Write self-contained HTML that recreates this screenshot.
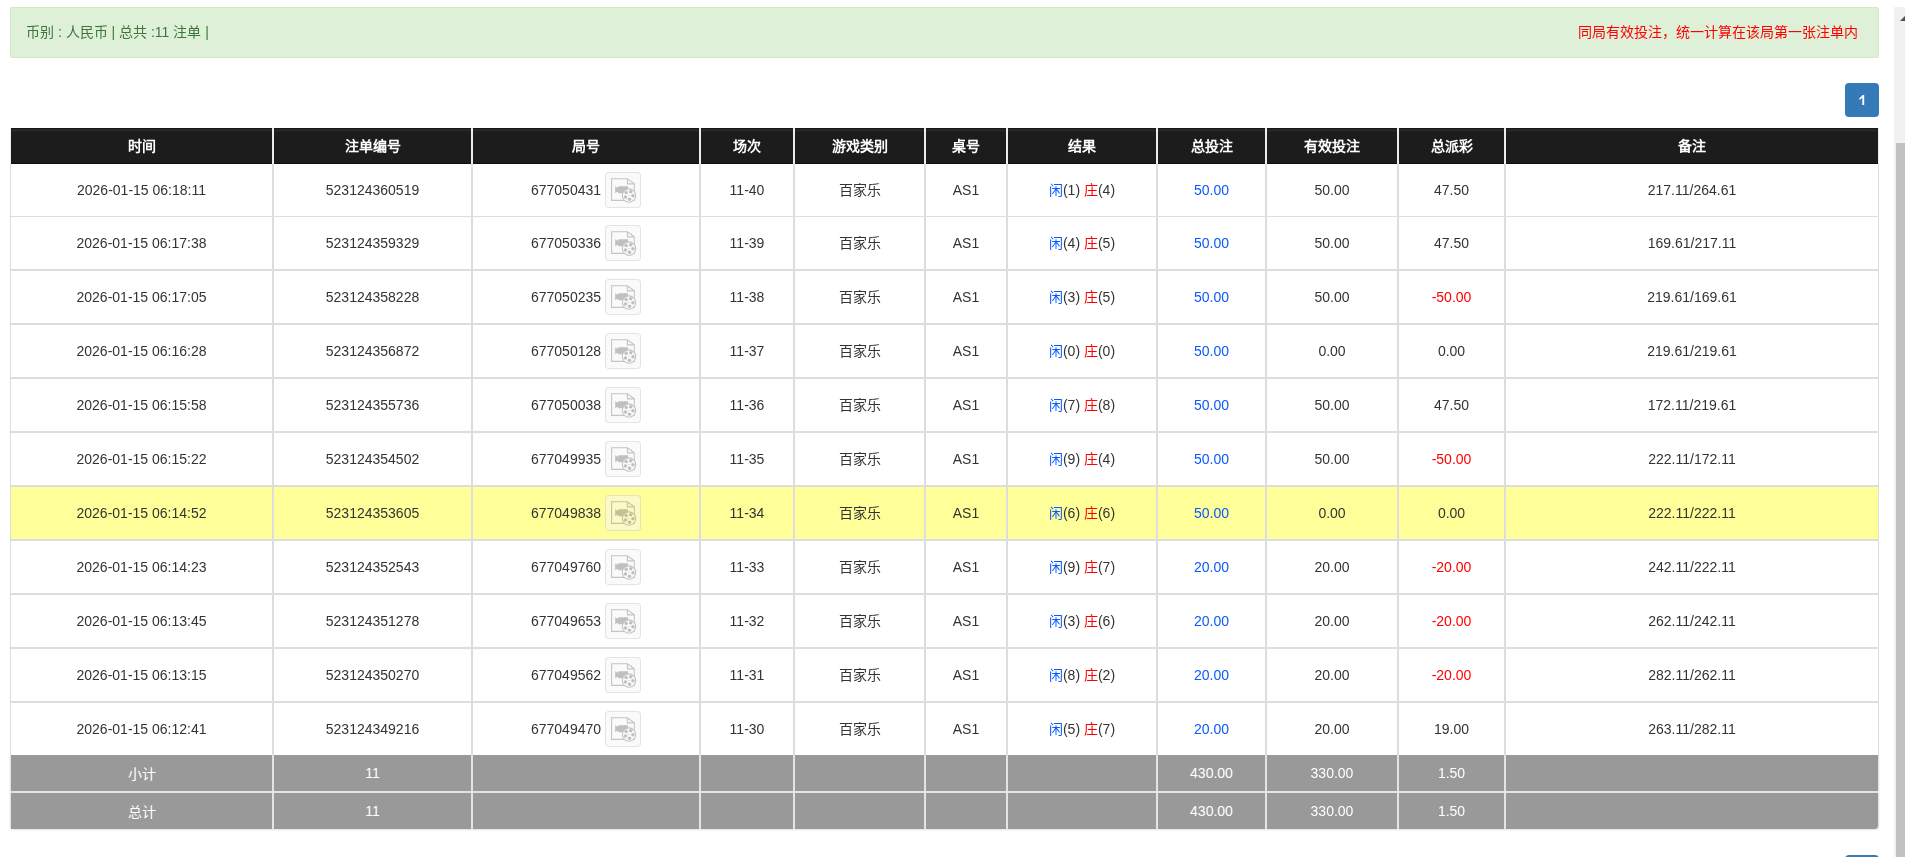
<!DOCTYPE html>
<html lang="zh-CN"><head><meta charset="utf-8"><title>注单</title>
<style>
html,body{margin:0;padding:0;background:#fff;overflow:hidden;}
body{width:1905px;height:857px;position:relative;font-family:"Liberation Sans",sans-serif;font-size:14px;color:#333;}
.a{position:absolute;}
.alert{left:10px;top:7px;width:1867px;height:49px;background:#dff0d8;border:1px solid #d6e9c6;border-radius:2px;}
.alert .l{position:absolute;left:15px;top:14px;line-height:20px;color:#3c763d;white-space:nowrap;}
.alert .r{position:absolute;right:20px;top:14px;line-height:20px;color:#ff0000;white-space:nowrap;}
.pg{left:1845px;top:83px;width:34px;height:34px;background:#337ab7;border-radius:4px;color:#fff;text-align:center;line-height:34px;}
.pg2{left:1845px;top:855px;width:34px;height:34px;background:#337ab7;border-radius:4px;}
.hd{top:128px;height:36px;background:linear-gradient(#171717 0,#171717 1px,#272727 1px,#262626 3px,#1c1c1c 4px,#1c1c1c 35px,#0d0d0d 35px);color:#fff;font-weight:bold;text-align:center;line-height:36px;}
.hsep{top:128px;height:36px;width:2px;background:#ececec;}
.c{display:flex;align-items:center;justify-content:center;white-space:nowrap;}
.vl{width:2px;background:#dddddd;}
.hl{background:#dddddd;}
.ft{background:#999999;color:#fff;}
.k{font-style:normal;position:relative;top:-1px;}
.blue{color:#0a58ff;}
.red{color:#ff0000;}
.ib{display:block;box-sizing:border-box;width:36px;height:36px;margin-left:4px;border:1px solid rgba(0,0,0,0.085);border-radius:4px;background:rgba(245,245,245,0.5);}
.ic{display:block;mix-blend-mode:multiply;}
.sb{left:1894px;top:7px;width:11px;height:850px;background:#f1f1f1;}
.th{left:1896px;top:143px;width:9px;height:714px;background:#c1c1c1;}
</style></head><body>

<div class="a alert"><span class="l">币别 : 人民币 | 总共 :11 注单 |</span><span class="r">同局有效投注，统一计算在该局第一张注单内</span></div>
<div class="a pg"><svg width="34" height="34" style="display:block"><path d="M17.3 12 H19.2 V22 H17.3 Z" fill="#fff"/><path d="M14 15.6 L17.6 12.2 L18.8 13.4 L14.9 16.8 Z" fill="#fff"/></svg></div><div class="a pg2"></div>
<div class="a hl" style="left:10px;top:164px;width:1px;height:591px"></div>
<div class="a hl" style="left:1878px;top:164px;width:1px;height:591px"></div>
<div class="a hd" style="left:11px;width:261px">时间</div>
<div class="a hd" style="left:274px;width:197px">注单编号</div>
<div class="a hd" style="left:473px;width:226px">局号</div>
<div class="a hd" style="left:701px;width:92px">场次</div>
<div class="a hd" style="left:795px;width:129px">游戏类别</div>
<div class="a hd" style="left:926px;width:80px">桌号</div>
<div class="a hd" style="left:1008px;width:148px">结果</div>
<div class="a hd" style="left:1158px;width:107px">总投注</div>
<div class="a hd" style="left:1267px;width:130px">有效投注</div>
<div class="a hd" style="left:1399px;width:105px">总派彩</div>
<div class="a hd" style="left:1506px;width:372px">备注</div>
<div class="a hsep" style="left:272px;width:2px"></div>
<div class="a hsep" style="left:471px;width:2px"></div>
<div class="a hsep" style="left:699px;width:2px"></div>
<div class="a hsep" style="left:793px;width:2px"></div>
<div class="a hsep" style="left:924px;width:2px"></div>
<div class="a hsep" style="left:1006px;width:2px"></div>
<div class="a hsep" style="left:1156px;width:2px"></div>
<div class="a hsep" style="left:1265px;width:2px"></div>
<div class="a hsep" style="left:1397px;width:2px"></div>
<div class="a hsep" style="left:1504px;width:2px"></div>
<div class="a hsep" style="left:10px;width:1px"></div>
<div class="a hsep" style="left:1878px;width:1px"></div>
<div class="a" style="left:11px;top:164px;width:1867px;height:52px;background:#ffffff"></div>
<div class="a c" style="left:11px;top:164px;width:261px;height:52px">2026-01-15 06:18:11</div>
<div class="a c" style="left:274px;top:164px;width:197px;height:52px">523124360519</div>
<div class="a c" style="left:473px;top:164px;width:226px;height:52px">677050431<span class="ib"><svg width="34" height="34" viewBox="0 0 34 34" class="ic"><g transform="translate(2,2)"><path d="M3.6 3.8 H19.4 L26.3 8.9 V25.4 H3.6 Z" fill="#fff" stroke="#c9c9c9" stroke-width="1.1"/><path d="M19.4 3.8 V8.9 H26.3" fill="none" stroke="#c9c9c9" stroke-width="1.1"/><path d="M7.2 11.3 L9.2 12.6 H10.2 V11.3 H20 V18.2 H10.2 V17 H9.2 L7.2 18.2 Z" fill="#c4c4c4"/><circle cx="21" cy="20.6" r="6.7" fill="#fff" stroke="#c9c9c9" stroke-width="1.1"/><circle cx="18.2" cy="17.5" r="1.75" fill="#c4c4c4"/><circle cx="22.75" cy="16.8" r="1.75" fill="#c4c4c4"/><circle cx="25" cy="20.65" r="1.75" fill="#c4c4c4"/><circle cx="21.5" cy="24.2" r="1.75" fill="#c4c4c4"/><circle cx="17.5" cy="22" r="1.75" fill="#c4c4c4"/><circle cx="21" cy="20.5" r="0.6" fill="#c4c4c4"/></g></svg></span></div>
<div class="a c" style="left:701px;top:164px;width:92px;height:52px">11-40</div>
<div class="a c" style="left:795px;top:164px;width:129px;height:52px"><i class="k">百家乐</i></div>
<div class="a c" style="left:926px;top:164px;width:80px;height:52px">AS1</div>
<div class="a c" style="left:1008px;top:164px;width:148px;height:52px"><i class="k blue">闲</i>(1)&nbsp;<i class="k red">庄</i>(4)</div>
<div class="a c" style="left:1158px;top:164px;width:107px;height:52px"><span class="blue">50.00</span></div>
<div class="a c" style="left:1267px;top:164px;width:130px;height:52px">50.00</div>
<div class="a c" style="left:1399px;top:164px;width:105px;height:52px">47.50</div>
<div class="a c" style="left:1506px;top:164px;width:372px;height:52px">217.11/264.61</div>
<div class="a" style="left:11px;top:217px;width:1867px;height:52px;background:#ffffff"></div>
<div class="a c" style="left:11px;top:217px;width:261px;height:52px">2026-01-15 06:17:38</div>
<div class="a c" style="left:274px;top:217px;width:197px;height:52px">523124359329</div>
<div class="a c" style="left:473px;top:217px;width:226px;height:52px">677050336<span class="ib"><svg width="34" height="34" viewBox="0 0 34 34" class="ic"><g transform="translate(2,2)"><path d="M3.6 3.8 H19.4 L26.3 8.9 V25.4 H3.6 Z" fill="#fff" stroke="#c9c9c9" stroke-width="1.1"/><path d="M19.4 3.8 V8.9 H26.3" fill="none" stroke="#c9c9c9" stroke-width="1.1"/><path d="M7.2 11.3 L9.2 12.6 H10.2 V11.3 H20 V18.2 H10.2 V17 H9.2 L7.2 18.2 Z" fill="#c4c4c4"/><circle cx="21" cy="20.6" r="6.7" fill="#fff" stroke="#c9c9c9" stroke-width="1.1"/><circle cx="18.2" cy="17.5" r="1.75" fill="#c4c4c4"/><circle cx="22.75" cy="16.8" r="1.75" fill="#c4c4c4"/><circle cx="25" cy="20.65" r="1.75" fill="#c4c4c4"/><circle cx="21.5" cy="24.2" r="1.75" fill="#c4c4c4"/><circle cx="17.5" cy="22" r="1.75" fill="#c4c4c4"/><circle cx="21" cy="20.5" r="0.6" fill="#c4c4c4"/></g></svg></span></div>
<div class="a c" style="left:701px;top:217px;width:92px;height:52px">11-39</div>
<div class="a c" style="left:795px;top:217px;width:129px;height:52px"><i class="k">百家乐</i></div>
<div class="a c" style="left:926px;top:217px;width:80px;height:52px">AS1</div>
<div class="a c" style="left:1008px;top:217px;width:148px;height:52px"><i class="k blue">闲</i>(4)&nbsp;<i class="k red">庄</i>(5)</div>
<div class="a c" style="left:1158px;top:217px;width:107px;height:52px"><span class="blue">50.00</span></div>
<div class="a c" style="left:1267px;top:217px;width:130px;height:52px">50.00</div>
<div class="a c" style="left:1399px;top:217px;width:105px;height:52px">47.50</div>
<div class="a c" style="left:1506px;top:217px;width:372px;height:52px">169.61/217.11</div>
<div class="a" style="left:11px;top:271px;width:1867px;height:52px;background:#ffffff"></div>
<div class="a c" style="left:11px;top:271px;width:261px;height:52px">2026-01-15 06:17:05</div>
<div class="a c" style="left:274px;top:271px;width:197px;height:52px">523124358228</div>
<div class="a c" style="left:473px;top:271px;width:226px;height:52px">677050235<span class="ib"><svg width="34" height="34" viewBox="0 0 34 34" class="ic"><g transform="translate(2,2)"><path d="M3.6 3.8 H19.4 L26.3 8.9 V25.4 H3.6 Z" fill="#fff" stroke="#c9c9c9" stroke-width="1.1"/><path d="M19.4 3.8 V8.9 H26.3" fill="none" stroke="#c9c9c9" stroke-width="1.1"/><path d="M7.2 11.3 L9.2 12.6 H10.2 V11.3 H20 V18.2 H10.2 V17 H9.2 L7.2 18.2 Z" fill="#c4c4c4"/><circle cx="21" cy="20.6" r="6.7" fill="#fff" stroke="#c9c9c9" stroke-width="1.1"/><circle cx="18.2" cy="17.5" r="1.75" fill="#c4c4c4"/><circle cx="22.75" cy="16.8" r="1.75" fill="#c4c4c4"/><circle cx="25" cy="20.65" r="1.75" fill="#c4c4c4"/><circle cx="21.5" cy="24.2" r="1.75" fill="#c4c4c4"/><circle cx="17.5" cy="22" r="1.75" fill="#c4c4c4"/><circle cx="21" cy="20.5" r="0.6" fill="#c4c4c4"/></g></svg></span></div>
<div class="a c" style="left:701px;top:271px;width:92px;height:52px">11-38</div>
<div class="a c" style="left:795px;top:271px;width:129px;height:52px"><i class="k">百家乐</i></div>
<div class="a c" style="left:926px;top:271px;width:80px;height:52px">AS1</div>
<div class="a c" style="left:1008px;top:271px;width:148px;height:52px"><i class="k blue">闲</i>(3)&nbsp;<i class="k red">庄</i>(5)</div>
<div class="a c" style="left:1158px;top:271px;width:107px;height:52px"><span class="blue">50.00</span></div>
<div class="a c" style="left:1267px;top:271px;width:130px;height:52px">50.00</div>
<div class="a c" style="left:1399px;top:271px;width:105px;height:52px"><span class="red">-50.00</span></div>
<div class="a c" style="left:1506px;top:271px;width:372px;height:52px">219.61/169.61</div>
<div class="a" style="left:11px;top:325px;width:1867px;height:52px;background:#ffffff"></div>
<div class="a c" style="left:11px;top:325px;width:261px;height:52px">2026-01-15 06:16:28</div>
<div class="a c" style="left:274px;top:325px;width:197px;height:52px">523124356872</div>
<div class="a c" style="left:473px;top:325px;width:226px;height:52px">677050128<span class="ib"><svg width="34" height="34" viewBox="0 0 34 34" class="ic"><g transform="translate(2,2)"><path d="M3.6 3.8 H19.4 L26.3 8.9 V25.4 H3.6 Z" fill="#fff" stroke="#c9c9c9" stroke-width="1.1"/><path d="M19.4 3.8 V8.9 H26.3" fill="none" stroke="#c9c9c9" stroke-width="1.1"/><path d="M7.2 11.3 L9.2 12.6 H10.2 V11.3 H20 V18.2 H10.2 V17 H9.2 L7.2 18.2 Z" fill="#c4c4c4"/><circle cx="21" cy="20.6" r="6.7" fill="#fff" stroke="#c9c9c9" stroke-width="1.1"/><circle cx="18.2" cy="17.5" r="1.75" fill="#c4c4c4"/><circle cx="22.75" cy="16.8" r="1.75" fill="#c4c4c4"/><circle cx="25" cy="20.65" r="1.75" fill="#c4c4c4"/><circle cx="21.5" cy="24.2" r="1.75" fill="#c4c4c4"/><circle cx="17.5" cy="22" r="1.75" fill="#c4c4c4"/><circle cx="21" cy="20.5" r="0.6" fill="#c4c4c4"/></g></svg></span></div>
<div class="a c" style="left:701px;top:325px;width:92px;height:52px">11-37</div>
<div class="a c" style="left:795px;top:325px;width:129px;height:52px"><i class="k">百家乐</i></div>
<div class="a c" style="left:926px;top:325px;width:80px;height:52px">AS1</div>
<div class="a c" style="left:1008px;top:325px;width:148px;height:52px"><i class="k blue">闲</i>(0)&nbsp;<i class="k red">庄</i>(0)</div>
<div class="a c" style="left:1158px;top:325px;width:107px;height:52px"><span class="blue">50.00</span></div>
<div class="a c" style="left:1267px;top:325px;width:130px;height:52px">0.00</div>
<div class="a c" style="left:1399px;top:325px;width:105px;height:52px">0.00</div>
<div class="a c" style="left:1506px;top:325px;width:372px;height:52px">219.61/219.61</div>
<div class="a" style="left:11px;top:379px;width:1867px;height:52px;background:#ffffff"></div>
<div class="a c" style="left:11px;top:379px;width:261px;height:52px">2026-01-15 06:15:58</div>
<div class="a c" style="left:274px;top:379px;width:197px;height:52px">523124355736</div>
<div class="a c" style="left:473px;top:379px;width:226px;height:52px">677050038<span class="ib"><svg width="34" height="34" viewBox="0 0 34 34" class="ic"><g transform="translate(2,2)"><path d="M3.6 3.8 H19.4 L26.3 8.9 V25.4 H3.6 Z" fill="#fff" stroke="#c9c9c9" stroke-width="1.1"/><path d="M19.4 3.8 V8.9 H26.3" fill="none" stroke="#c9c9c9" stroke-width="1.1"/><path d="M7.2 11.3 L9.2 12.6 H10.2 V11.3 H20 V18.2 H10.2 V17 H9.2 L7.2 18.2 Z" fill="#c4c4c4"/><circle cx="21" cy="20.6" r="6.7" fill="#fff" stroke="#c9c9c9" stroke-width="1.1"/><circle cx="18.2" cy="17.5" r="1.75" fill="#c4c4c4"/><circle cx="22.75" cy="16.8" r="1.75" fill="#c4c4c4"/><circle cx="25" cy="20.65" r="1.75" fill="#c4c4c4"/><circle cx="21.5" cy="24.2" r="1.75" fill="#c4c4c4"/><circle cx="17.5" cy="22" r="1.75" fill="#c4c4c4"/><circle cx="21" cy="20.5" r="0.6" fill="#c4c4c4"/></g></svg></span></div>
<div class="a c" style="left:701px;top:379px;width:92px;height:52px">11-36</div>
<div class="a c" style="left:795px;top:379px;width:129px;height:52px"><i class="k">百家乐</i></div>
<div class="a c" style="left:926px;top:379px;width:80px;height:52px">AS1</div>
<div class="a c" style="left:1008px;top:379px;width:148px;height:52px"><i class="k blue">闲</i>(7)&nbsp;<i class="k red">庄</i>(8)</div>
<div class="a c" style="left:1158px;top:379px;width:107px;height:52px"><span class="blue">50.00</span></div>
<div class="a c" style="left:1267px;top:379px;width:130px;height:52px">50.00</div>
<div class="a c" style="left:1399px;top:379px;width:105px;height:52px">47.50</div>
<div class="a c" style="left:1506px;top:379px;width:372px;height:52px">172.11/219.61</div>
<div class="a" style="left:11px;top:433px;width:1867px;height:52px;background:#ffffff"></div>
<div class="a c" style="left:11px;top:433px;width:261px;height:52px">2026-01-15 06:15:22</div>
<div class="a c" style="left:274px;top:433px;width:197px;height:52px">523124354502</div>
<div class="a c" style="left:473px;top:433px;width:226px;height:52px">677049935<span class="ib"><svg width="34" height="34" viewBox="0 0 34 34" class="ic"><g transform="translate(2,2)"><path d="M3.6 3.8 H19.4 L26.3 8.9 V25.4 H3.6 Z" fill="#fff" stroke="#c9c9c9" stroke-width="1.1"/><path d="M19.4 3.8 V8.9 H26.3" fill="none" stroke="#c9c9c9" stroke-width="1.1"/><path d="M7.2 11.3 L9.2 12.6 H10.2 V11.3 H20 V18.2 H10.2 V17 H9.2 L7.2 18.2 Z" fill="#c4c4c4"/><circle cx="21" cy="20.6" r="6.7" fill="#fff" stroke="#c9c9c9" stroke-width="1.1"/><circle cx="18.2" cy="17.5" r="1.75" fill="#c4c4c4"/><circle cx="22.75" cy="16.8" r="1.75" fill="#c4c4c4"/><circle cx="25" cy="20.65" r="1.75" fill="#c4c4c4"/><circle cx="21.5" cy="24.2" r="1.75" fill="#c4c4c4"/><circle cx="17.5" cy="22" r="1.75" fill="#c4c4c4"/><circle cx="21" cy="20.5" r="0.6" fill="#c4c4c4"/></g></svg></span></div>
<div class="a c" style="left:701px;top:433px;width:92px;height:52px">11-35</div>
<div class="a c" style="left:795px;top:433px;width:129px;height:52px"><i class="k">百家乐</i></div>
<div class="a c" style="left:926px;top:433px;width:80px;height:52px">AS1</div>
<div class="a c" style="left:1008px;top:433px;width:148px;height:52px"><i class="k blue">闲</i>(9)&nbsp;<i class="k red">庄</i>(4)</div>
<div class="a c" style="left:1158px;top:433px;width:107px;height:52px"><span class="blue">50.00</span></div>
<div class="a c" style="left:1267px;top:433px;width:130px;height:52px">50.00</div>
<div class="a c" style="left:1399px;top:433px;width:105px;height:52px"><span class="red">-50.00</span></div>
<div class="a c" style="left:1506px;top:433px;width:372px;height:52px">222.11/172.11</div>
<div class="a" style="left:11px;top:487px;width:1867px;height:52px;background:#ffff99"></div>
<div class="a c" style="left:11px;top:487px;width:261px;height:52px">2026-01-15 06:14:52</div>
<div class="a c" style="left:274px;top:487px;width:197px;height:52px">523124353605</div>
<div class="a c" style="left:473px;top:487px;width:226px;height:52px">677049838<span class="ib"><svg width="34" height="34" viewBox="0 0 34 34" class="ic"><g transform="translate(2,2)"><path d="M3.6 3.8 H19.4 L26.3 8.9 V25.4 H3.6 Z" fill="#fff" stroke="#c9c9c9" stroke-width="1.1"/><path d="M19.4 3.8 V8.9 H26.3" fill="none" stroke="#c9c9c9" stroke-width="1.1"/><path d="M7.2 11.3 L9.2 12.6 H10.2 V11.3 H20 V18.2 H10.2 V17 H9.2 L7.2 18.2 Z" fill="#c4c4c4"/><circle cx="21" cy="20.6" r="6.7" fill="#fff" stroke="#c9c9c9" stroke-width="1.1"/><circle cx="18.2" cy="17.5" r="1.75" fill="#c4c4c4"/><circle cx="22.75" cy="16.8" r="1.75" fill="#c4c4c4"/><circle cx="25" cy="20.65" r="1.75" fill="#c4c4c4"/><circle cx="21.5" cy="24.2" r="1.75" fill="#c4c4c4"/><circle cx="17.5" cy="22" r="1.75" fill="#c4c4c4"/><circle cx="21" cy="20.5" r="0.6" fill="#c4c4c4"/></g></svg></span></div>
<div class="a c" style="left:701px;top:487px;width:92px;height:52px">11-34</div>
<div class="a c" style="left:795px;top:487px;width:129px;height:52px"><i class="k">百家乐</i></div>
<div class="a c" style="left:926px;top:487px;width:80px;height:52px">AS1</div>
<div class="a c" style="left:1008px;top:487px;width:148px;height:52px"><i class="k blue">闲</i>(6)&nbsp;<i class="k red">庄</i>(6)</div>
<div class="a c" style="left:1158px;top:487px;width:107px;height:52px"><span class="blue">50.00</span></div>
<div class="a c" style="left:1267px;top:487px;width:130px;height:52px">0.00</div>
<div class="a c" style="left:1399px;top:487px;width:105px;height:52px">0.00</div>
<div class="a c" style="left:1506px;top:487px;width:372px;height:52px">222.11/222.11</div>
<div class="a" style="left:11px;top:541px;width:1867px;height:52px;background:#ffffff"></div>
<div class="a c" style="left:11px;top:541px;width:261px;height:52px">2026-01-15 06:14:23</div>
<div class="a c" style="left:274px;top:541px;width:197px;height:52px">523124352543</div>
<div class="a c" style="left:473px;top:541px;width:226px;height:52px">677049760<span class="ib"><svg width="34" height="34" viewBox="0 0 34 34" class="ic"><g transform="translate(2,2)"><path d="M3.6 3.8 H19.4 L26.3 8.9 V25.4 H3.6 Z" fill="#fff" stroke="#c9c9c9" stroke-width="1.1"/><path d="M19.4 3.8 V8.9 H26.3" fill="none" stroke="#c9c9c9" stroke-width="1.1"/><path d="M7.2 11.3 L9.2 12.6 H10.2 V11.3 H20 V18.2 H10.2 V17 H9.2 L7.2 18.2 Z" fill="#c4c4c4"/><circle cx="21" cy="20.6" r="6.7" fill="#fff" stroke="#c9c9c9" stroke-width="1.1"/><circle cx="18.2" cy="17.5" r="1.75" fill="#c4c4c4"/><circle cx="22.75" cy="16.8" r="1.75" fill="#c4c4c4"/><circle cx="25" cy="20.65" r="1.75" fill="#c4c4c4"/><circle cx="21.5" cy="24.2" r="1.75" fill="#c4c4c4"/><circle cx="17.5" cy="22" r="1.75" fill="#c4c4c4"/><circle cx="21" cy="20.5" r="0.6" fill="#c4c4c4"/></g></svg></span></div>
<div class="a c" style="left:701px;top:541px;width:92px;height:52px">11-33</div>
<div class="a c" style="left:795px;top:541px;width:129px;height:52px"><i class="k">百家乐</i></div>
<div class="a c" style="left:926px;top:541px;width:80px;height:52px">AS1</div>
<div class="a c" style="left:1008px;top:541px;width:148px;height:52px"><i class="k blue">闲</i>(9)&nbsp;<i class="k red">庄</i>(7)</div>
<div class="a c" style="left:1158px;top:541px;width:107px;height:52px"><span class="blue">20.00</span></div>
<div class="a c" style="left:1267px;top:541px;width:130px;height:52px">20.00</div>
<div class="a c" style="left:1399px;top:541px;width:105px;height:52px"><span class="red">-20.00</span></div>
<div class="a c" style="left:1506px;top:541px;width:372px;height:52px">242.11/222.11</div>
<div class="a" style="left:11px;top:595px;width:1867px;height:52px;background:#ffffff"></div>
<div class="a c" style="left:11px;top:595px;width:261px;height:52px">2026-01-15 06:13:45</div>
<div class="a c" style="left:274px;top:595px;width:197px;height:52px">523124351278</div>
<div class="a c" style="left:473px;top:595px;width:226px;height:52px">677049653<span class="ib"><svg width="34" height="34" viewBox="0 0 34 34" class="ic"><g transform="translate(2,2)"><path d="M3.6 3.8 H19.4 L26.3 8.9 V25.4 H3.6 Z" fill="#fff" stroke="#c9c9c9" stroke-width="1.1"/><path d="M19.4 3.8 V8.9 H26.3" fill="none" stroke="#c9c9c9" stroke-width="1.1"/><path d="M7.2 11.3 L9.2 12.6 H10.2 V11.3 H20 V18.2 H10.2 V17 H9.2 L7.2 18.2 Z" fill="#c4c4c4"/><circle cx="21" cy="20.6" r="6.7" fill="#fff" stroke="#c9c9c9" stroke-width="1.1"/><circle cx="18.2" cy="17.5" r="1.75" fill="#c4c4c4"/><circle cx="22.75" cy="16.8" r="1.75" fill="#c4c4c4"/><circle cx="25" cy="20.65" r="1.75" fill="#c4c4c4"/><circle cx="21.5" cy="24.2" r="1.75" fill="#c4c4c4"/><circle cx="17.5" cy="22" r="1.75" fill="#c4c4c4"/><circle cx="21" cy="20.5" r="0.6" fill="#c4c4c4"/></g></svg></span></div>
<div class="a c" style="left:701px;top:595px;width:92px;height:52px">11-32</div>
<div class="a c" style="left:795px;top:595px;width:129px;height:52px"><i class="k">百家乐</i></div>
<div class="a c" style="left:926px;top:595px;width:80px;height:52px">AS1</div>
<div class="a c" style="left:1008px;top:595px;width:148px;height:52px"><i class="k blue">闲</i>(3)&nbsp;<i class="k red">庄</i>(6)</div>
<div class="a c" style="left:1158px;top:595px;width:107px;height:52px"><span class="blue">20.00</span></div>
<div class="a c" style="left:1267px;top:595px;width:130px;height:52px">20.00</div>
<div class="a c" style="left:1399px;top:595px;width:105px;height:52px"><span class="red">-20.00</span></div>
<div class="a c" style="left:1506px;top:595px;width:372px;height:52px">262.11/242.11</div>
<div class="a" style="left:11px;top:649px;width:1867px;height:52px;background:#ffffff"></div>
<div class="a c" style="left:11px;top:649px;width:261px;height:52px">2026-01-15 06:13:15</div>
<div class="a c" style="left:274px;top:649px;width:197px;height:52px">523124350270</div>
<div class="a c" style="left:473px;top:649px;width:226px;height:52px">677049562<span class="ib"><svg width="34" height="34" viewBox="0 0 34 34" class="ic"><g transform="translate(2,2)"><path d="M3.6 3.8 H19.4 L26.3 8.9 V25.4 H3.6 Z" fill="#fff" stroke="#c9c9c9" stroke-width="1.1"/><path d="M19.4 3.8 V8.9 H26.3" fill="none" stroke="#c9c9c9" stroke-width="1.1"/><path d="M7.2 11.3 L9.2 12.6 H10.2 V11.3 H20 V18.2 H10.2 V17 H9.2 L7.2 18.2 Z" fill="#c4c4c4"/><circle cx="21" cy="20.6" r="6.7" fill="#fff" stroke="#c9c9c9" stroke-width="1.1"/><circle cx="18.2" cy="17.5" r="1.75" fill="#c4c4c4"/><circle cx="22.75" cy="16.8" r="1.75" fill="#c4c4c4"/><circle cx="25" cy="20.65" r="1.75" fill="#c4c4c4"/><circle cx="21.5" cy="24.2" r="1.75" fill="#c4c4c4"/><circle cx="17.5" cy="22" r="1.75" fill="#c4c4c4"/><circle cx="21" cy="20.5" r="0.6" fill="#c4c4c4"/></g></svg></span></div>
<div class="a c" style="left:701px;top:649px;width:92px;height:52px">11-31</div>
<div class="a c" style="left:795px;top:649px;width:129px;height:52px"><i class="k">百家乐</i></div>
<div class="a c" style="left:926px;top:649px;width:80px;height:52px">AS1</div>
<div class="a c" style="left:1008px;top:649px;width:148px;height:52px"><i class="k blue">闲</i>(8)&nbsp;<i class="k red">庄</i>(2)</div>
<div class="a c" style="left:1158px;top:649px;width:107px;height:52px"><span class="blue">20.00</span></div>
<div class="a c" style="left:1267px;top:649px;width:130px;height:52px">20.00</div>
<div class="a c" style="left:1399px;top:649px;width:105px;height:52px"><span class="red">-20.00</span></div>
<div class="a c" style="left:1506px;top:649px;width:372px;height:52px">282.11/262.11</div>
<div class="a" style="left:11px;top:703px;width:1867px;height:52px;background:#ffffff"></div>
<div class="a c" style="left:11px;top:703px;width:261px;height:52px">2026-01-15 06:12:41</div>
<div class="a c" style="left:274px;top:703px;width:197px;height:52px">523124349216</div>
<div class="a c" style="left:473px;top:703px;width:226px;height:52px">677049470<span class="ib"><svg width="34" height="34" viewBox="0 0 34 34" class="ic"><g transform="translate(2,2)"><path d="M3.6 3.8 H19.4 L26.3 8.9 V25.4 H3.6 Z" fill="#fff" stroke="#c9c9c9" stroke-width="1.1"/><path d="M19.4 3.8 V8.9 H26.3" fill="none" stroke="#c9c9c9" stroke-width="1.1"/><path d="M7.2 11.3 L9.2 12.6 H10.2 V11.3 H20 V18.2 H10.2 V17 H9.2 L7.2 18.2 Z" fill="#c4c4c4"/><circle cx="21" cy="20.6" r="6.7" fill="#fff" stroke="#c9c9c9" stroke-width="1.1"/><circle cx="18.2" cy="17.5" r="1.75" fill="#c4c4c4"/><circle cx="22.75" cy="16.8" r="1.75" fill="#c4c4c4"/><circle cx="25" cy="20.65" r="1.75" fill="#c4c4c4"/><circle cx="21.5" cy="24.2" r="1.75" fill="#c4c4c4"/><circle cx="17.5" cy="22" r="1.75" fill="#c4c4c4"/><circle cx="21" cy="20.5" r="0.6" fill="#c4c4c4"/></g></svg></span></div>
<div class="a c" style="left:701px;top:703px;width:92px;height:52px">11-30</div>
<div class="a c" style="left:795px;top:703px;width:129px;height:52px"><i class="k">百家乐</i></div>
<div class="a c" style="left:926px;top:703px;width:80px;height:52px">AS1</div>
<div class="a c" style="left:1008px;top:703px;width:148px;height:52px"><i class="k blue">闲</i>(5)&nbsp;<i class="k red">庄</i>(7)</div>
<div class="a c" style="left:1158px;top:703px;width:107px;height:52px"><span class="blue">20.00</span></div>
<div class="a c" style="left:1267px;top:703px;width:130px;height:52px">20.00</div>
<div class="a c" style="left:1399px;top:703px;width:105px;height:52px">19.00</div>
<div class="a c" style="left:1506px;top:703px;width:372px;height:52px">263.11/282.11</div>
<div class="a hl" style="left:10px;top:216px;width:1869px;height:1px"></div>
<div class="a hl" style="left:10px;top:269px;width:1869px;height:2px"></div>
<div class="a hl" style="left:10px;top:323px;width:1869px;height:2px"></div>
<div class="a hl" style="left:10px;top:377px;width:1869px;height:2px"></div>
<div class="a hl" style="left:10px;top:431px;width:1869px;height:2px"></div>
<div class="a hl" style="left:10px;top:485px;width:1869px;height:2px"></div>
<div class="a hl" style="left:10px;top:539px;width:1869px;height:2px"></div>
<div class="a hl" style="left:10px;top:593px;width:1869px;height:2px"></div>
<div class="a hl" style="left:10px;top:647px;width:1869px;height:2px"></div>
<div class="a hl" style="left:10px;top:701px;width:1869px;height:2px"></div>
<div class="a vl" style="left:272px;top:164px;height:591px"></div>
<div class="a vl" style="left:471px;top:164px;height:591px"></div>
<div class="a vl" style="left:699px;top:164px;height:591px"></div>
<div class="a vl" style="left:793px;top:164px;height:591px"></div>
<div class="a vl" style="left:924px;top:164px;height:591px"></div>
<div class="a vl" style="left:1006px;top:164px;height:591px"></div>
<div class="a vl" style="left:1156px;top:164px;height:591px"></div>
<div class="a vl" style="left:1265px;top:164px;height:591px"></div>
<div class="a vl" style="left:1397px;top:164px;height:591px"></div>
<div class="a vl" style="left:1504px;top:164px;height:591px"></div>
<div class="a ft" style="left:10px;top:755px;width:1869px;height:74px;box-sizing:border-box;border-left:1px solid #e3e3e3;border-right:1px solid #e3e3e3;border-radius:0 0 4px 4px;box-shadow:0 1px 2px rgba(0,0,0,0.12)"></div>
<div class="a" style="left:10px;top:791px;width:1869px;height:2px;background:#e3e3e3"></div>
<div class="a" style="left:272px;top:755px;width:2px;height:74px;background:#e3e3e3"></div>
<div class="a" style="left:471px;top:755px;width:2px;height:74px;background:#e3e3e3"></div>
<div class="a" style="left:699px;top:755px;width:2px;height:74px;background:#e3e3e3"></div>
<div class="a" style="left:793px;top:755px;width:2px;height:74px;background:#e3e3e3"></div>
<div class="a" style="left:924px;top:755px;width:2px;height:74px;background:#e3e3e3"></div>
<div class="a" style="left:1006px;top:755px;width:2px;height:74px;background:#e3e3e3"></div>
<div class="a" style="left:1156px;top:755px;width:2px;height:74px;background:#e3e3e3"></div>
<div class="a" style="left:1265px;top:755px;width:2px;height:74px;background:#e3e3e3"></div>
<div class="a" style="left:1397px;top:755px;width:2px;height:74px;background:#e3e3e3"></div>
<div class="a" style="left:1504px;top:755px;width:2px;height:74px;background:#e3e3e3"></div>
<div class="a c ft" style="left:11px;top:755px;width:261px;height:36px">小计</div>
<div class="a c ft" style="left:274px;top:755px;width:197px;height:36px">11</div>
<div class="a c ft" style="left:1158px;top:755px;width:107px;height:36px">430.00</div>
<div class="a c ft" style="left:1267px;top:755px;width:130px;height:36px">330.00</div>
<div class="a c ft" style="left:1399px;top:755px;width:105px;height:36px">1.50</div>
<div class="a c ft" style="left:11px;top:793px;width:261px;height:36px">总计</div>
<div class="a c ft" style="left:274px;top:793px;width:197px;height:36px">11</div>
<div class="a c ft" style="left:1158px;top:793px;width:107px;height:36px">430.00</div>
<div class="a c ft" style="left:1267px;top:793px;width:130px;height:36px">330.00</div>
<div class="a c ft" style="left:1399px;top:793px;width:105px;height:36px">1.50</div>
<div class="a sb"></div><div class="a th"></div>
<svg class="a" style="left:1894px;top:7px" width="11" height="20"><path d="M6 14 L12 8 L18 14 Z" fill="#505050"/></svg>
</body></html>
